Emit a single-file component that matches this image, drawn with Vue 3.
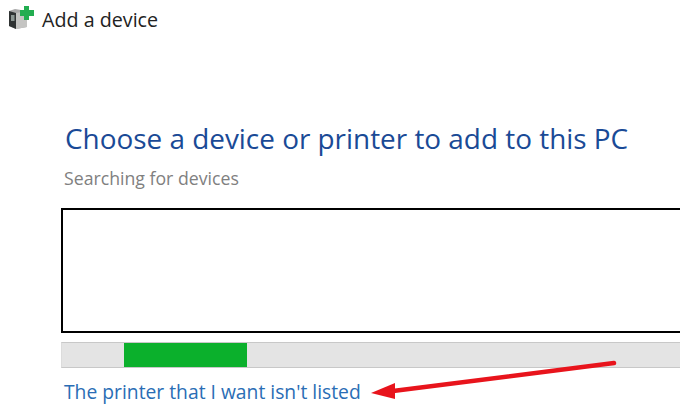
<script setup>
const title = 'Add a device'
const heading = 'Choose a device or printer to add to this PC'
</script>

<template>
  <div class="window">
    <header class="titlebar">
      <svg class="device-icon" width="25" height="23" viewBox="0 0 25 23">
        <path d="M0 5 L6 3 L18 5 L18 21 L7 23 L0 20 Z" fill="#a8a8a8" />
        <path d="M0 5 L7 7 L7 23 L0 20 Z" fill="#2f3333" />
        <path d="M7 7 L18 5 L18 21 L7 23 Z" fill="#c4c4c2" />
        <rect x="2" y="9" width="3.5" height="6" fill="#8b9692" />
        <path d="M15 0 H20 V4 H25 V10 H20 V14 H15 V10 H11 V4 H15 Z" fill="#22ad50" />
      </svg>
      <span class="title">{{ title }}</span>
    </header>

    <main class="content">
      <h1>{{ heading }}</h1>
      <p class="status">Searching for devices</p>
      <div class="device-list"></div>
      <div class="progress"><div class="progress-fill"></div></div>
      <div class="link-row">
        <a class="link">The printer that I want isn't listed</a>
        <svg class="arrow" width="250" height="40" viewBox="0 0 250 40">
          <path d="M246 3 L25 31" stroke="#e8141c" stroke-width="4.5" stroke-linecap="round" fill="none" />
          <path d="M3 33 L27 23 L27 39 Z" fill="#e8141c" />
        </svg>
      </div>
    </main>
  </div>
</template>

<style>
body {
  margin: 0;
  background: #fff;
}
</style>

<style scoped>
.window {
  width: 680px;
  height: 406px;
  overflow: hidden;
  background: #fff;
  font-family: "Open Sans", "Noto Sans", sans-serif;
}

.titlebar {
  display: flex;
  align-items: center;
  gap: 8px;
  padding: 7px 0 0 9px;
  height: 24px;
}

.device-icon {
  margin-top: -3px;
}

.title {
  font-size: 19.7px;
  color: #222;
}

.content {
  padding: 89px 0 0 61px;
}

h1 {
  margin: 0 0 0 4px;
  font-size: 27.9px;
  font-weight: 400;
  line-height: 36px;
  color: #1a4a96;
  white-space: nowrap;
}

.status {
  margin: 11px 0 0 3px;
  font-size: 17.7px;
  line-height: 22px;
  color: #808080;
}

.device-list {
  margin-top: 19px;
  height: 121px;
  width: 640px;
  border: 2px solid #000;
}

.progress {
  margin-top: 9px;
  height: 24px;
  width: 640px;
  background: #e4e4e4;
  border: 1px solid #c8c8c8;
  border-left-color: #dcdcdc;
  border-right: none;
}

.progress-fill {
  margin-left: 62px;
  width: 123px;
  height: 100%;
  background: #0bb02c;
}

.link-row {
  position: relative;
  margin-top: 11px;
  height: 26px;
}

.link {
  margin-left: 3px;
  font-size: 19.3px;
  line-height: 26px;
  color: #2a6db5;
  white-space: nowrap;
}

.arrow {
  position: absolute;
  left: 307px;
  top: -19px;
}
</style>
